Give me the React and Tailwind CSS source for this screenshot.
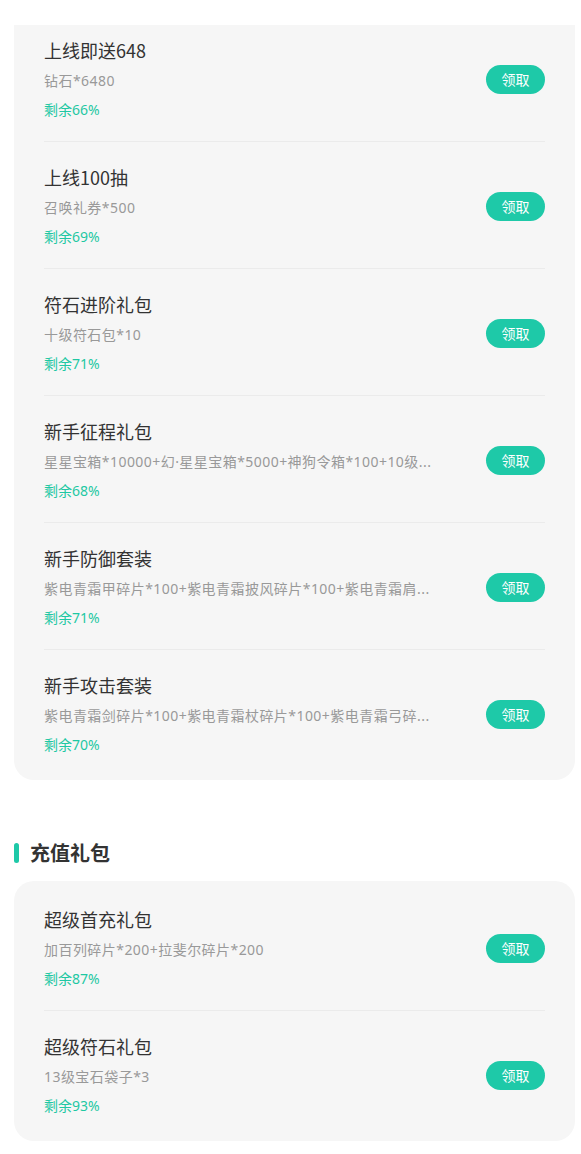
import React from "react";

const freeGifts = [
  { title: "上线即送648", desc: "钻石*6480", left: 66 },
  { title: "上线100抽", desc: "召唤礼券*500", left: 69 },
  { title: "符石进阶礼包", desc: "十级符石包*10", left: 71 },
  {
    title: "新手征程礼包",
    desc: "星星宝箱*10000+幻·星星宝箱*5000+神狗令箱*100+10级...",
    left: 68,
  },
  {
    title: "新手防御套装",
    desc: "紫电青霜甲碎片*100+紫电青霜披风碎片*100+紫电青霜肩...",
    left: 71,
  },
  {
    title: "新手攻击套装",
    desc: "紫电青霜剑碎片*100+紫电青霜杖碎片*100+紫电青霜弓碎...",
    left: 70,
  },
];

const payGifts = [
  { title: "超级首充礼包", desc: "加百列碎片*200+拉斐尔碎片*200", left: 87 },
  { title: "超级符石礼包", desc: "13级宝石袋子*3", left: 93 },
];

function GiftRow({ gift, last, first }) {
  return (
    <div
      className={`flex items-center ${first ? "pt-[12px]" : "pt-[22px]"} pb-[19px] ${
        last ? "" : "border-b border-[#ebebeb]"
      }`}
    >
      <div className="min-w-0 flex-1">
        <div className="text-[18px] leading-[26px] text-[#333]">{gift.title}</div>
        <div className="mt-[6px] whitespace-nowrap font-['Noto_Sans','Noto_Sans_CJK_SC',sans-serif] text-[14px] leading-[24px] tracking-[0.45px] text-[#999]">
          {gift.desc}
        </div>
        <div className="mt-[5px] font-['Noto_Sans','Noto_Sans_CJK_SC',sans-serif] text-[14px] leading-[24px] text-[#1fc8a3]">
          剩余{gift.left}%
        </div>
      </div>
      <button className="h-[29px] w-[59px] shrink-0 rounded-full bg-[#1ec9a8] text-[14px] text-white">
        领取
      </button>
    </div>
  );
}

export default function App() {
  return (
    <div
      className="min-h-screen bg-white pt-[25px] pb-[12px]"
      style={{ fontFamily: '"Noto Sans CJK SC", "Noto Sans", sans-serif' }}
    >
      <div className="ml-[14px] mr-[6px] rounded-b-[20px] bg-[#f6f6f6] px-[30px] pb-[4px]">
        {freeGifts.map((g, i) => (
          <GiftRow key={g.title} gift={g} first={i === 0} last={i === freeGifts.length - 1} />
        ))}
      </div>

      <div className="mt-[63px] ml-[14px] flex items-center">
        <span className="h-[20px] w-[5px] rounded-full bg-[#1ec9a8]" />
        <h2 className="ml-[11px] text-[20px] font-bold leading-[20px] text-[#333]">充值礼包</h2>
      </div>

      <div className="mt-[18px] ml-[14px] mr-[6px] rounded-[20px] bg-[#f6f6f6] px-[30px] pt-[3px] pb-[4px]">
        {payGifts.map((g, i) => (
          <GiftRow key={g.title} gift={g} last={i === payGifts.length - 1} />
        ))}
      </div>
    </div>
  );
}
